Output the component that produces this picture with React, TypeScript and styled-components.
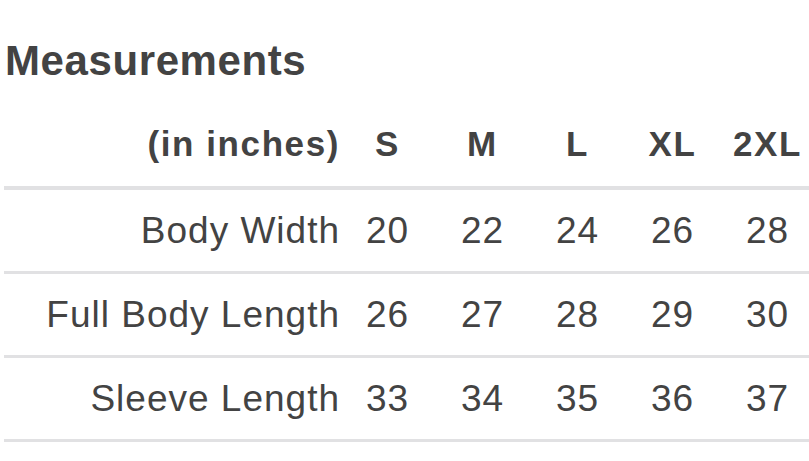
import styled, { createGlobalStyle } from "styled-components";

const sizes = ["S", "M", "L", "XL", "2XL"];

const rows = [
    { label: "Body Width", values: [20, 22, 24, 26, 28] },
    { label: "Full Body Length", values: [26, 27, 28, 29, 30] },
    { label: "Sleeve Length", values: [33, 34, 35, 36, 37] },
];

export default function App() {
    return (
        <>
            <GlobalStyle />
            <Page>
                <Title>Measurements</Title>
                <Table>
                    <HeadRow>
                        <HeadLabel>(in inches)</HeadLabel>
                        {sizes.map((size) => (
                            <HeadCell key={size}>{size}</HeadCell>
                        ))}
                    </HeadRow>
                    {rows.map((row) => (
                        <BodyRow key={row.label}>
                            <RowLabel>{row.label}</RowLabel>
                            {row.values.map((value, i) => (
                                <Cell key={sizes[i]}>{value}</Cell>
                            ))}
                        </BodyRow>
                    ))}
                </Table>
            </Page>
        </>
    );
}

const GlobalStyle = createGlobalStyle`
    html, body {
        margin: 0;
        padding: 0;
        background: #ffffff;
        overflow: hidden;
    }
    body {
        font-family: "Liberation Sans", Arial, sans-serif;
        color: #434343;
    }
`;

const Page = styled.div`
    width: 809px;
    height: 461px;
    padding: 40px 0 0 4px;
    box-sizing: border-box;
`;

const Title = styled.h1`
    margin: 0 0 0 1px;
    font-size: 42px;
    line-height: 42px;
    font-weight: 700;
    letter-spacing: 0.6px;
`;

const Table = styled.div`
    margin-top: 20px;
    width: 809px;
`;

const Row = styled.div`
    display: grid;
    grid-template-columns: 336px repeat(5, 95px);
    align-items: center;
`;

const HeadRow = styled(Row)`
    height: 84px;
    border-bottom: 4px solid #e1e1e3;
    font-size: 35px;
    font-weight: 700;
    letter-spacing: 1.6px;
`;

const BodyRow = styled(Row)`
    height: 81px;
    border-bottom: 3px solid #e1e1e3;
    font-size: 37px;
    letter-spacing: 1px;
`;

const HeadLabel = styled.div`
    text-align: right;
`;

const HeadCell = styled.div`
    text-align: center;
`;

const RowLabel = styled.div`
    text-align: right;
`;

const Cell = styled.div`
    text-align: center;
`;
